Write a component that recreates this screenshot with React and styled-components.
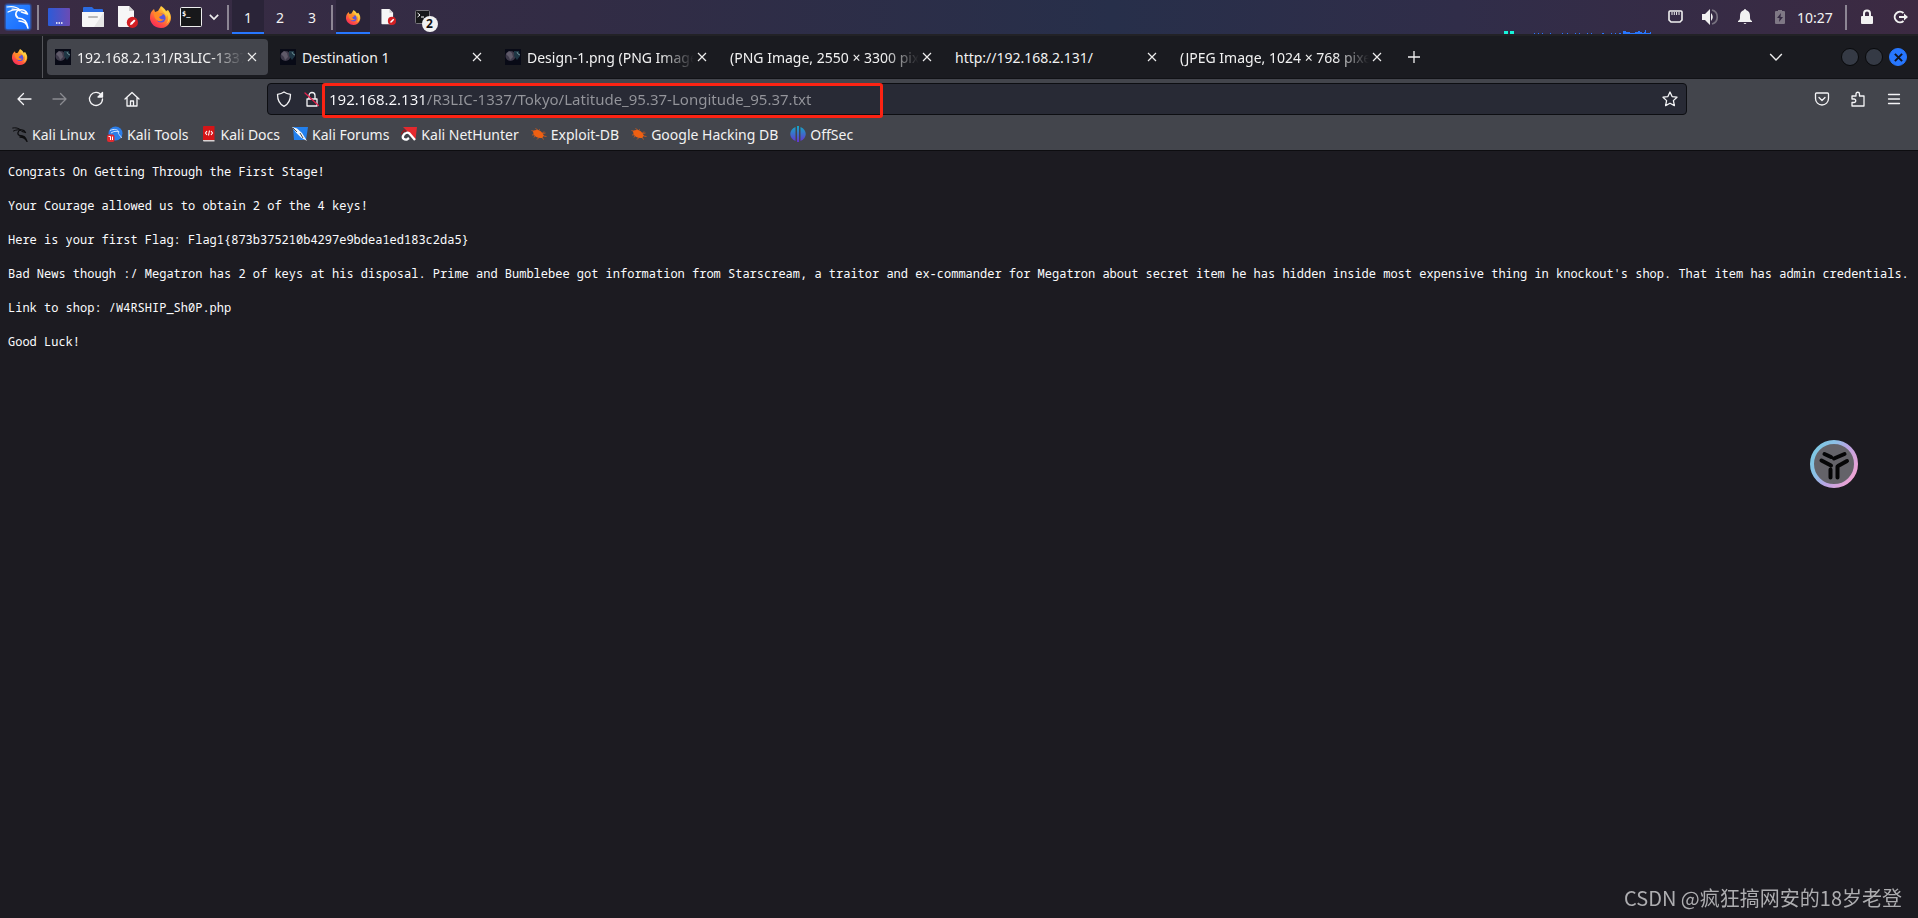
import React from "react";
import styled, { createGlobalStyle } from "styled-components";

const colors = {
  panelLine: "#222226",
  tabBar: "#1a1b20",
  toolbar: "#43454c",
  field: "#282a35",
  page: "#1c1b21",
  text: "#f2f2f2",
  accent: "#2777ff",
  mark: "#fc2313",
};

const GlobalStyle = createGlobalStyle`
  * {
    box-sizing: border-box;
  }
  body {
    margin: 0;
    background: ${colors.page};
    color: ${colors.text};
    font-family: "Noto Sans", "Open Sans", sans-serif;
    font-size: 14px;
  }
  button {
    border: 0;
    padding: 0;
    background: none;
    color: inherit;
    font: inherit;
    cursor: pointer;
  }
  svg {
    display: block;
    flex: none;
  }
`;

const Screen = styled.div`
  display: flex;
  flex-direction: column;
  min-height: 100vh;
`;

/* desktop panel */
const Panel = styled.header`
  display: flex;
  align-items: center;
  height: 36px;
  padding-left: 3px;
  border-bottom: 2px solid ${colors.panelLine};
  background: linear-gradient(90deg, #3a2b43 0%, #322c45 30%, #272f4a 58%, #302d49 76%, #3c2a42 100%);
`;

const Launchers = styled.div`
  display: flex;
  align-items: center;
`;

const PanelButton = styled.button`
  display: flex;
  align-items: center;
  justify-content: center;
  width: ${(props) => props.$width || 34}px;
  height: 34px;
`;

const Divider = styled.span`
  width: 2px;
  height: 25px;
  margin: ${(props) => props.$margin || "0 3px"};
  background: #8d8694;
`;

const Workspace = styled(PanelButton)`
  border-top: 2px solid transparent;
  border-bottom: 2px solid ${(props) => (props.$active ? colors.accent : "transparent")};
  background: ${(props) => (props.$active ? "#2a2438" : "transparent")};
  background-clip: border-box;
`;

const TaskIcon = styled.span`
  position: relative;
`;

const Count = styled.span`
  position: absolute;
  left: 7px;
  top: 6px;
  width: 16px;
  height: 16px;
  border-radius: 50%;
  background: #f1f1f1;
  color: #111;
  font-size: 12px;
  font-weight: 700;
  line-height: 16px;
  text-align: center;
`;

const Tray = styled.div`
  display: flex;
  align-items: center;
  align-self: stretch;
  margin-left: auto;
`;

const NetGraph = styled.svg`
  align-self: flex-end;
`;

const Clock = styled.time`
  width: 36px;
  text-align: center;
`;

/* browser */
const TabBar = styled.nav`
  display: flex;
  align-items: center;
  height: 43px;
  padding-right: 11px;
  background: ${colors.tabBar};
  border-bottom: 1px solid #111216;
`;

const FirefoxView = styled.button`
  display: flex;
  align-items: center;
  justify-content: center;
  width: 43px;
  padding-right: 3px;
  align-self: stretch;
  border-right: 1px solid #55565b;
`;

const Tabs = styled.div`
  display: flex;
  flex: 0 1 1346px;
  min-width: 0;
  gap: 4px;
  margin-left: 4px;
`;

const Tab = styled.div`
  display: flex;
  flex: 1 1 0;
  align-items: center;
  min-width: 0;
  height: 36px;
  padding: 0 8px;
  border-radius: 4px;
  background: ${(props) => (props.$active ? colors.toolbar : "transparent")};
`;

const TabTitle = styled.button`
  display: flex;
  flex: 1;
  align-items: center;
  gap: 6px;
  min-width: 0;
  height: 36px;
  overflow: hidden;
  white-space: nowrap;
  mask-image: ${(props) => (props.$fade ? "linear-gradient(90deg, #000 calc(100% - 34px), transparent)" : "none")};
`;

const CloseTab = styled.button`
  display: flex;
  align-items: center;
  justify-content: center;
  width: 16px;
  height: 24px;
`;

const NewTab = styled.button`
  margin-left: 6px;
  padding: 8px;
`;

const WindowControls = styled.div`
  display: flex;
  align-items: center;
  gap: 6px;
  margin-left: auto;
`;

const WindowButton = styled.button`
  display: flex;
  align-items: center;
  justify-content: center;
  width: 18px;
  height: 18px;
  border: 1px solid ${(props) => (props.$close ? colors.accent : "#08090b")};
  border-radius: 50%;
  background: ${(props) => (props.$close ? colors.accent : "#353a45")};
`;

const ListTabs = styled.button`
  padding: 8px;
  margin-right: 44px;
`;

const Toolbar = styled.div`
  display: flex;
  align-items: center;
  height: 40px;
  padding: 0 6px;
  background: ${colors.toolbar};
`;

const ToolButton = styled.button`
  display: flex;
  align-items: center;
  justify-content: center;
  width: 36px;
  height: 36px;
  opacity: ${(props) => (props.disabled ? 0.4 : 1)};
`;

const Spacer = styled.span`
  flex: 0 1 117px;
`;

const UrlBar = styled.div`
  display: flex;
  flex: 1;
  align-items: center;
  height: 32px;
  padding: 0 8px;
  border: 1px solid #0d0e12;
  border-radius: 4px;
  background: ${colors.field};
`;

const UrlIcons = styled.div`
  display: flex;
  gap: 12px;
`;

const UrlField = styled.div`
  position: relative;
  display: flex;
  flex: 1;
  margin-left: 9px;
`;

/* host part is bright, path part is dimmed */
const UrlInput = styled.input`
  width: 100%;
  height: 28px;
  padding: 0;
  border: 0;
  outline: 0;
  font: inherit;
  font-size: 15px;
  color: transparent;
  caret-color: ${colors.text};
  background: linear-gradient(90deg, #fbfbfe 98px, #94959b 98px);
  background-clip: text;
`;

const Highlight = styled.span`
  position: absolute;
  left: -7px;
  top: -2px;
  width: 561px;
  height: 35px;
  border: 3px solid ${colors.mark};
  border-radius: 3px;
  pointer-events: none;
`;

const Bookmarks = styled.nav`
  display: flex;
  align-items: center;
  gap: 12px;
  height: 32px;
  padding: 0 12px 1px;
  background: ${colors.toolbar};
  border-bottom: 1px solid #0d0d10;
`;

const Bookmark = styled.a`
  display: flex;
  align-items: center;
  gap: 4px;
  color: inherit;
  text-decoration: none;
  white-space: nowrap;
`;

const Content = styled.main`
  flex: 1;
  overflow: hidden;
`;

const PlainText = styled.pre`
  margin: 0;
  padding: 12px 8px;
  font-family: "Noto Sans Mono", "DejaVu Sans Mono", monospace;
  font-size: 12px;
  line-height: 17px;
  color: #fbfbfe;
`;

const Assistant = styled.button`
  position: fixed;
  right: 60px;
  top: 440px;
`;

const Watermark = styled.p`
  position: fixed;
  right: 16px;
  bottom: 6px;
  margin: 0;
  color: #adadb0;
  font-family: "Noto Sans CJK SC", sans-serif;
  font-size: 20px;
  line-height: 28px;
`;

/* icons */
const KaliMenuIcon = () => (
  <svg width="30" height="30" viewBox="0 0 30 30">
    <defs>
      <linearGradient id="kali" x1="0" y1="0" x2="1" y2="1">
        <stop offset="0" stopColor="#3189ff" />
        <stop offset="1" stopColor="#166aff" />
      </linearGradient>
    </defs>
    <rect x="1" y="1" width="28" height="28" rx="4" fill="#2777ff" opacity=".25" />
    <rect x="2" y="2" width="26" height="26" rx="3" fill="#2777ff" opacity=".4" />
    <rect x="3" y="3" width="24" height="24" rx="1" fill="url(#kali)" />
    <g fill="none" stroke="#fff" strokeLinecap="round" strokeLinejoin="round">
      <path d="M4 5c5-1 10 0 13 3M5 10c4-2 8-3 12-2M9 7c3 0 6 0 8 2" strokeWidth="1.2" />
      <path d="M17 8c3-1 6 1 7.500 4l-3-1-3-1" strokeWidth="1.6" />
      <path d="M17 8c-4 0-6 5-2 8 5 0 9 3 10 10-1-4-4-7-9-7" strokeWidth="1.6" />
    </g>
  </svg>
);

const DesktopIcon = () => (
  <svg width="22" height="18" viewBox="0 0 22 18">
    <defs>
      <linearGradient id="desk">
        <stop offset="0" stopColor="#2c5bd8" />
        <stop offset="1" stopColor="#6b4bb4" />
      </linearGradient>
    </defs>
    <rect width="22" height="18" rx="1" fill="url(#desk)" />
    <path d="M8 15h1.500M10.500 15H12M13 15h1.500" stroke="#fff" strokeWidth="1.400" />
  </svg>
);

const FolderIcon = () => (
  <svg width="22" height="20" viewBox="0 0 22 20">
    <path d="M1 1q0-1 1-1h8l2 2h8q1 0 1 1v5H1z" fill="#2b6be0" />
    <path d="M0 5h22v14q0 1-1 1H1q-1 0-1-1z" fill="#f7f7f7" />
    <path d="M22 5v14q0 1-1 1h-9z" fill="#e6e6e6" />
    <rect x="6" y="9" width="10" height="2" rx="1" fill="#b9b9b9" />
  </svg>
);

const EditorIcon = ({ size = 22 }) => (
  <svg width={size} height={size} viewBox="0 0 22 22">
    <path d="M2 0h11l5 5v16H3q-1 0-1-1z" fill="#f6f6f6" />
    <path d="M13 0l5 5h-5z" fill="#cfcfcf" />
    <circle cx="16.400" cy="16.400" r="5.600" fill="#d21f23" />
    <path d="M14 19l.6-2.200 3.600-3.400 1.300 1.400-3.400 3.600z" fill="#fff" />
  </svg>
);

const FirefoxIcon = ({ size = 22 }) => (
  <svg width={size} height={size} viewBox="0 0 22 22">
    <defs>
      <linearGradient id="ff" x1=".85" y1="0" x2=".2" y2="1">
        <stop offset="0" stopColor="#ffe24a" />
        <stop offset=".4" stopColor="#ff9a2b" />
        <stop offset=".75" stopColor="#ff4a45" />
        <stop offset="1" stopColor="#f3245f" />
      </linearGradient>
    </defs>
    <path d="M2 5l2-2 1 3 3-1 3-5c2 1 4 3 5 5l2-1c3 4 4 8 2 12-2 4-5 6-9 6-6 0-10-4-11-9 0-3 0-6 2-8z" fill="url(#ff)" />
    <circle cx="11" cy="12" r="4.600" fill="#5a55dc" />
    <path d="M4 7c2-1 4-1 6 0l3 1c-1 2-3 2-4 3 1 2 3 3 5 2-2 3-7 3-9-1-1-2-1-3-1-5z" fill="#ff8a26" />
    <path d="M11 1c0 4 5 5 5 10 1-1 1-3 0-4 3 3 3 8 0 11 5-3 5-9 2-13l-2 1c-1-2-3-4-5-5z" fill="#ffd043" />
  </svg>
);

const TerminalIcon = () => (
  <svg width="22" height="20" viewBox="0 0 22 20">
    <rect x=".5" y=".5" width="21" height="19" rx="1" fill="#17181a" stroke="#eee" />
    <text x="2" y="9" fill="#fff" fontFamily="DejaVu Sans Mono" fontSize="7" fontWeight="700">$_</text>
  </svg>
);

const SmallTerminalIcon = () => (
  <svg width="15" height="14" viewBox="0 0 15 14">
    <rect x=".5" y=".5" width="14" height="13" rx="1" fill="#17181a" stroke="#77757b" />
    <path d="M2.500 3l2.500 2-2.500 2M6 7h3" fill="none" stroke="#fff" />
  </svg>
);

const ChevronIcon = ({ width = 10, stroke = 2 }) => (
  <svg width={width} height={width} viewBox="0 0 12 12">
    <path d="M1 3.500l5 5 5-5" fill="none" stroke="#eee" strokeWidth={stroke} />
  </svg>
);

const EthernetIcon = () => (
  <svg width="15" height="14" viewBox="0 0 15 14">
    <path d="M2 1h11q1 0 1 1v8l-2 2H3l-2-2V2q0-1 1-1z" fill="none" stroke="#f1f1f1" strokeWidth="1.600" />
    <path d="M4 2v3M6.300 2v3M8.600 2v3M11 2v3" stroke="#f1f1f1" />
  </svg>
);

const SpeakerIcon = () => (
  <svg width="18" height="18" viewBox="0 0 18 18">
    <path d="M1 6h3l5-5v16l-5-5H1z" fill="#f1f1f1" />
    <path d="M10 5q3.500 4 0 8z" fill="#f1f1f1" />
    <path d="M11 2c7 2 7 12 0 14" fill="none" stroke="#77717f" strokeWidth="1.700" />
  </svg>
);

const BellIcon = () => (
  <svg width="14" height="16" viewBox="0 0 14 16">
    <path d="M7 0q1 0 1 1c3 1 4 3 4 6 0 3 0 4 2 5v1H0v-1c2-1 2-2 2-5 0-3 1-5 4-6q0-1 1-1zM5.500 14h3q-1.500 2-3 0z" fill="#f1f1f1" />
  </svg>
);

const BatteryIcon = () => (
  <svg width="10" height="14" viewBox="0 0 10 14">
    <path d="M3 0h4v1h2q1 0 1 1v11q0 1-1 1H1q-1 0-1-1V2q0-1 1-1h2z" fill="#7f7885" />
    <path d="M6 3L2 8h2.500L4 12l4-5H5.500z" fill="#352a43" />
  </svg>
);

const LockIcon = () => (
  <svg width="14" height="16" viewBox="0 0 14 16">
    <rect x="1" y="7" width="12" height="8" rx="1" fill="#f1f1f1" />
    <path d="M4 8V4.500a3 3 0 0 1 6 0V8" fill="none" stroke="#f1f1f1" strokeWidth="2" />
  </svg>
);

const LogoutIcon = () => (
  <svg width="16" height="14" viewBox="0 0 16 14">
    <path d="M10.500 3a5.300 5.300 0 1 0 0 8" fill="none" stroke="#f1f1f1" strokeWidth="2" />
    <path d="M6 6h5V3.500L15 7l-4 3.500V8H6z" fill="#f1f1f1" />
  </svg>
);

const Favicon = () => (
  <svg width="16" height="16" viewBox="0 0 16 16">
    <rect width="16" height="16" fill="#080a16" />
    <circle cx="5.500" cy="7" r="5" fill="#3e3a4a" />
    <path d="M1 5l3-3 3 2 1 4-3 3-1-3z" fill="#77707f" opacity=".6" />
    <path d="M9 2l5 0 1 5-3 4-3-4z" fill="#1e3543" />
    <path d="M12 3l1 2 2 1" stroke="#6a8c91" fill="none" />
  </svg>
);

const CrossIcon = ({ size = 10, stroke = 1.2, color = "#eee" }) => (
  <svg width={size} height={size} viewBox="0 0 10 10">
    <path d="M1 1l8 8M9 1L1 9" stroke={color} strokeWidth={stroke} />
  </svg>
);

// 16px outline glyphs shared by the toolbar
const Line = ({ d, color = "#f4f4f6", children }) => (
  <svg width="16" height="16" viewBox="0 0 16 16" fill="none" stroke={color} strokeWidth="1.300" strokeLinecap="round" strokeLinejoin="round">
    <path d={d} />
    {children}
  </svg>
);

const BugIcon = () => (
  <svg width="16" height="16" viewBox="0 0 16 16">
    <path d="M2 5c2-1.500 6-1.500 8.500 1l2.500 3.500-2 2.500c-4 .5-7-1-8.500-4z" fill="#ef6012" />
    <path d="M1 9l4-.5-2 3M4.500 2.500l3 2 1.500-1M6 13.500l2-2M13 5.500l-2 2 3.500-.5M11 11l1.500 2.500M12.500 10l3 .5M.5 4.500l2.500.8" stroke="#ef6012" fill="none" strokeWidth=".7" />
  </svg>
);

const DragonIcon = () => (
  <svg width="16" height="16" viewBox="0 0 16 16">
    <g fill="none" stroke="#0c0c0e" strokeLinecap="round" strokeLinejoin="round">
      <path d="M.7 2c3-.6 6 0 8 2M1.500 5c2.500-1.200 5-1.500 7-1" strokeWidth="1" />
      <path d="M8.500 4c2-.5 4 .5 5 2.500l-3.500-1M8.500 4c-3 1-3.500 4.500-1 5.500 4 0 6.500 2 7.500 6-1.500-3-3.500-4.500-7-4.500" strokeWidth="1.300" />
    </g>
  </svg>
);

const ToolsIcon = () => (
  <svg width="16" height="16" viewBox="0 0 16 16">
    <circle cx="8.500" cy="7.500" r="7" fill="#2b7de9" />
    <path d="M3 4.500c4-2 8-1 9 1.500-2 2.500 1.500 2.500 2.500 6M4 7c3-2 5-2 8-1" fill="none" stroke="#cfe4ff" strokeWidth="1" />
    <rect y="8.500" width="7.500" height="7.500" rx="2" fill="#e02a2f" />
    <path d="M1.500 10.500h2V14M5.500 10.500V14" stroke="#fff" fill="none" />
  </svg>
);

const DocsIcon = () => (
  <svg width="16" height="16" viewBox="0 0 16 16">
    <path d="M2 1q0-1 1-1h10.500v14H2z" fill="#d51518" />
    <path d="M2 14h11.500v1.500H3q-1 0-1-1z" fill="#d9d3d3" />
    <path d="M6 5L4.500 7 6 9M10 5l1.500 2L10 9M8.500 4.500l-1 5" fill="none" stroke="#fff" strokeWidth="1.100" />
  </svg>
);

const ForumsIcon = () => (
  <svg width="16" height="16" viewBox="0 0 16 16">
    <path d="M1 1h15l-2 13H2z" fill="#2280ee" />
    <path d="M0 1l5 1.500 5 4.500 5 8-6-3.500-5-5z" fill="#f5f7fa" />
    <path d="M1 2l4 4M8 7l3 5" stroke="#222" strokeWidth=".8" />
  </svg>
);

const NetHunterIcon = () => (
  <svg width="16" height="16" viewBox="0 0 16 16">
    <path d="M2 1h14l-1.500 12.500-5-5z" fill="#e4292e" />
    <path d="M14 14L8.500 7.500C6 5.500 3 7.500 2 10s1.500 4 4 3.500L8 12" fill="none" stroke="#fff" strokeWidth="2.300" />
    <path d="M0 8.500L3 4l2 2" stroke="#a5161b" strokeWidth="1.200" fill="none" />
  </svg>
);

const OffSecIcon = () => (
  <svg width="16" height="16" viewBox="0 0 16 16">
    <defs>
      <linearGradient id="offsec" x1="0" y1="0" x2="0" y2="1">
        <stop offset="0" stopColor="#14a9c4" />
        <stop offset="1" stopColor="#6533d1" />
      </linearGradient>
    </defs>
    <path d="M5.500 1v14C-1.500 12-1.500 4 5.500 1zM7 0h2v16H7zM10.500 1v14c7-3 7-11 0-14z" fill="url(#offsec)" />
  </svg>
);

const AssistantIcon = () => (
  <svg width="48" height="48" viewBox="0 0 48 48">
    <defs>
      <linearGradient id="ring" x1="0" y1=".2" x2="1" y2=".8">
        <stop offset="0" stopColor="#7cc8e2" />
        <stop offset=".3" stopColor="#8cc0e6" />
        <stop offset=".55" stopColor="#b9a5e4" />
        <stop offset="1" stopColor="#f3a3d2" />
      </linearGradient>
    </defs>
    <circle cx="24" cy="24" r="22" fill="#646369" stroke="url(#ring)" strokeWidth="4" />
    <path d="M14.500 14l6.500 3M11.500 20.500l9.500 5M24 18.500l10.500-4.500M37 21l-9 5M20.500 29.500v8M27.500 26.500v11" fill="none" stroke="#050506" strokeWidth="4" strokeLinecap="round" />
  </svg>
);

const tabs = [
  { title: "192.168.2.131/R3LIC-1337/", icon: true, fade: true, active: true },
  { title: "Destination 1", icon: true },
  { title: "Design-1.png (PNG Image", icon: true, fade: true },
  { title: "(PNG Image, 2550 × 3300 pix", fade: true },
  { title: "http://192.168.2.131/" },
  { title: "(JPEG Image, 1024 × 768 pixe", fade: true },
];

const bookmarks = [
  ["Kali Linux", DragonIcon],
  ["Kali Tools", ToolsIcon],
  ["Kali Docs", DocsIcon],
  ["Kali Forums", ForumsIcon],
  ["Kali NetHunter", NetHunterIcon],
  ["Exploit-DB", BugIcon],
  ["Google Hacking DB", BugIcon],
  ["OffSec", OffSecIcon],
];

const message = `Congrats On Getting Through the First Stage!

Your Courage allowed us to obtain 2 of the 4 keys!

Here is your first Flag: Flag1{873b375210b4297e9bdea1ed183c2da5}

Bad News though :/ Megatron has 2 of keys at his disposal. Prime and Bumblebee got information from Starscream, a traitor and ex-commander for Megatron about secret item he has hidden inside most expensive thing in knockout's shop. That item has admin credentials.

Link to shop: /W4RSHIP_Sh0P.php

Good Luck!`;

const DesktopPanel = () => (
  <Panel>
    <Launchers>
      <PanelButton aria-label="Applications" $width={29}><KaliMenuIcon /></PanelButton>
      <Divider $margin="0 3px 0 5px" />
      <PanelButton aria-label="Show desktop"><DesktopIcon /></PanelButton>
      <PanelButton aria-label="Files"><FolderIcon /></PanelButton>
      <PanelButton aria-label="Text editor"><EditorIcon /></PanelButton>
      <PanelButton aria-label="Firefox"><FirefoxIcon /></PanelButton>
      <PanelButton aria-label="Terminal" $width={26}><TerminalIcon /></PanelButton>
      <PanelButton aria-label="More terminals" $width={20}><ChevronIcon /></PanelButton>
      <Divider />
      <Workspace $active $width={32}>1</Workspace>
      <Workspace $width={32}>2</Workspace>
      <Workspace $width={32}>3</Workspace>
      <Divider />
      <Workspace $active aria-label="Firefox window"><FirefoxIcon size={15} /></Workspace>
      <Workspace $width={36} aria-label="Editor window"><EditorIcon size={16} /></Workspace>
      <Workspace $width={32} aria-label="Terminal windows">
        <TaskIcon>
          <SmallTerminalIcon />
          <Count>2</Count>
        </TaskIcon>
      </Workspace>
    </Launchers>
    <Tray>
      <NetGraph width="153" height="4" viewBox="0 0 153 4">
        <path d="M0 1h4v3H0zM6 1h4v3H6z" fill="#17f3d8" />
        <path
          d="M30 3h1v1h-1zM34 3h1v1h-1zM38 3h1v1h-1zM46 3h1v1h-1zM58 3h1v1h-1zM63 3h1v1h-1zM71 3h1v1h-1zM75 3h1v1h-1zM83 3h1v1h-1zM87 3h1v1h-1zM98 3h2v1h-2zM107 3h1v1h-1zM111 3h1v1h-1zM115 3h2v1h-2zM119 1h3v1h4v1h5v-1h3v-1h2v1h2v1h2v-1h1v-2h1v3h4v-1h1v2h-28z"
          fill="#2777ff"
        />
      </NetGraph>
      <PanelButton aria-label="Network" $width={36}><EthernetIcon /></PanelButton>
      <PanelButton aria-label="Volume"><SpeakerIcon /></PanelButton>
      <PanelButton aria-label="Notifications" $width={36}><BellIcon /></PanelButton>
      <PanelButton aria-label="Power"><BatteryIcon /></PanelButton>
      <Clock>10:27</Clock>
      <Divider $margin="0 3px 0 12px" />
      <PanelButton aria-label="Lock screen"><LockIcon /></PanelButton>
      <PanelButton aria-label="Log out"><LogoutIcon /></PanelButton>
    </Tray>
  </Panel>
);

const BrowserTabs = () => (
  <TabBar aria-label="Tabs">
    <FirefoxView aria-label="Firefox View"><FirefoxIcon size={16} /></FirefoxView>
    <Tabs>
      {tabs.map((tab) => (
        <Tab key={tab.title} $active={tab.active}>
          <TabTitle $fade={tab.fade}>
            {tab.icon && <Favicon />}
            {tab.title}
          </TabTitle>
          <CloseTab aria-label="Close tab"><CrossIcon /></CloseTab>
        </Tab>
      ))}
    </Tabs>
    <NewTab aria-label="New tab">
      <svg width="14" height="14" viewBox="0 0 14 14">
        <path d="M7 1v12M1 7h12" stroke="#f1f1f1" strokeWidth="1.300" />
      </svg>
    </NewTab>
    <WindowControls>
      <ListTabs aria-label="List all tabs"><ChevronIcon width={14} stroke={1.2} /></ListTabs>
      <WindowButton aria-label="Minimize" />
      <WindowButton aria-label="Maximize" />
      <WindowButton $close aria-label="Close window"><CrossIcon size={9} stroke={2.2} color="#101420" /></WindowButton>
    </WindowControls>
  </TabBar>
);

const NavigationBar = () => (
  <Toolbar>
    <ToolButton aria-label="Back"><Line d="M15 8H2M7.500 2.500L2 8l5.500 5.500" /></ToolButton>
    <ToolButton aria-label="Forward" disabled><Line d="M1 8h13M8.500 2.500L14 8l-5.500 5.500" /></ToolButton>
    <ToolButton aria-label="Reload">
      <Line d="M13.500 4.500A6.500 6.500 0 1 0 14.500 8">
        <path d="M14.500 1.500v4.500H10z" fill="#f4f4f6" />
      </Line>
    </ToolButton>
    <ToolButton aria-label="Home"><Line d="M1 8l7-6.500L15 8M3 6.500V15h10V6.500M6.500 15v-5h3v5" /></ToolButton>
    <Spacer />
    <UrlBar>
      <UrlIcons>
        <Line d="M8 1c2 1.500 4 2 6.500 2.300C14.500 9 13 13 8 15.300 3 13 1.500 9 1.500 3.300 4 3 6 2.500 8 1z" />
        <Line d="M3 8h10v7H3zM5 8V4.500a3 3 0 0 1 6 0V8">
          <path d="M1 2l13.500 12.500" stroke="#e3204b" />
        </Line>
      </UrlIcons>
      <UrlField>
        <UrlInput aria-label="Address" defaultValue="192.168.2.131/R3LIC-1337/Tokyo/Latitude_95.37-Longitude_95.37.txt" />
        <Highlight />
      </UrlField>
      <Line d="M8 1l2.100 4.600 4.900.6-3.600 3.400 1 5L8 12.200l-4.400 2.400 1-5L1 6.200l4.900-.6z" />
    </UrlBar>
    <Spacer />
    <ToolButton aria-label="Pocket">
      <Line d="M2.500 2h11q1 0 1 1v4.500a6.500 6.500 0 0 1-13 0V3q0-1 1-1zM5 6.500l3 3 3-3" />
    </ToolButton>
    <ToolButton aria-label="Extensions">
      <Line d="M2 15V11.500h2a1.600 1.600 0 0 0 0-3.500H2V5h4V3a1.700 1.700 0 0 1 3.500 0v2H14v10z" />
    </ToolButton>
    <ToolButton aria-label="Menu"><Line d="M2.500 3.500h11M2.500 8h11M2.500 12.500h11" /></ToolButton>
  </Toolbar>
);

const App = () => {
  return (
    <Screen>
      <GlobalStyle />
      <DesktopPanel />
      <BrowserTabs />
      <NavigationBar />
      <Bookmarks aria-label="Bookmarks">
        {bookmarks.map(([label, Icon]) => (
          <Bookmark key={label} href="#">
            <Icon />
            {label}
          </Bookmark>
        ))}
      </Bookmarks>
      <Content>
        <PlainText>{message}</PlainText>
      </Content>
      <Assistant aria-label="Assistant"><AssistantIcon /></Assistant>
      <Watermark>CSDN @疯狂搞网安的18岁老登</Watermark>
    </Screen>
  );
};

export default App;
